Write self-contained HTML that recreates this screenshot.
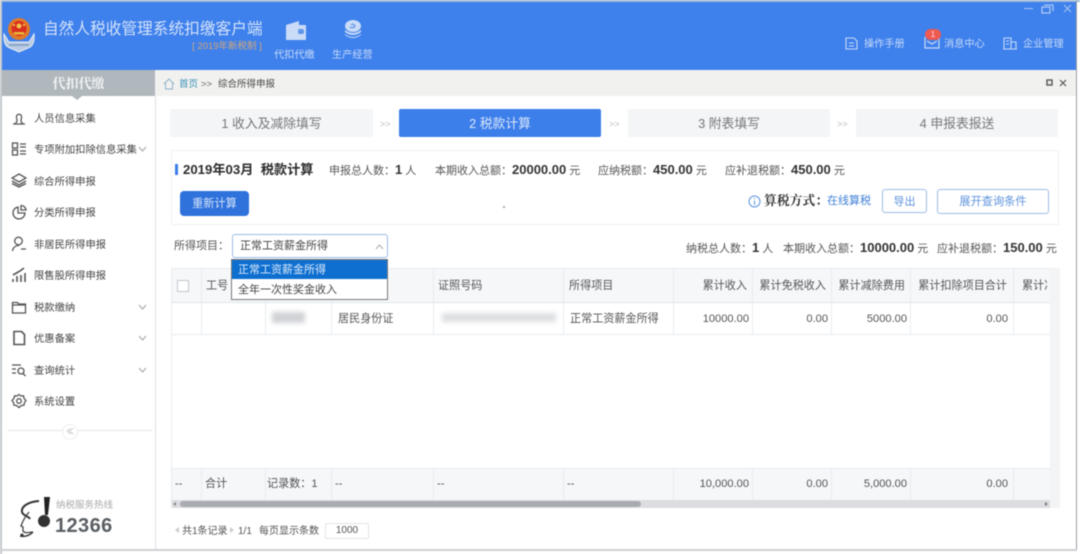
<!DOCTYPE html>
<html><head><meta charset="utf-8">
<style>
html,body{margin:0;padding:0;background:#fff}
#p{position:relative;width:1080px;height:554px;overflow:hidden;background:#fff;font-family:"Liberation Sans","Noto Sans CJK SC",sans-serif;font-size:11px;color:#555;filter:blur(.4px)}
#p div,#p svg{position:absolute}
.t{white-space:nowrap;line-height:16px}
.b{font-weight:bold;color:#333;font-size:13px}
.st{top:109px;height:28px;line-height:30px;background:#f3f5f7;color:#777;text-align:center;font-size:12.8px}
.ar{top:117px;color:#bbb;font-size:9px;line-height:14px}
.m{left:34px;color:#444;font-size:10.3px;white-space:nowrap;line-height:16px}
.ic{left:11px;width:16px;height:16px;fill:none;stroke:#555;stroke-width:1.3}
.ch{left:138px;width:9px;height:6px;fill:none;stroke:#aaa;stroke-width:1.2}
.v{background:#e8ecef;width:1px}
.h{background:#e8ecef;height:1px}
.c{white-space:nowrap;line-height:16px;color:#555;font-size:11.1px}
.r{text-align:right}
.wh{color:#c6daf9;font-size:10.2px;white-space:nowrap;line-height:14px}
</style></head><body><div id="p">

<!-- header -->
<div style="left:1px;top:1px;width:1075px;height:69px;background:#3e80ec"></div>
<div style="left:0;top:0;width:1080px;height:2px;background:#9db9d8"></div>
<div style="left:0;top:0;width:2px;height:554px;background:#c4c8cc"></div>
<div style="left:1076px;top:0;width:1px;height:551px;background:#9a9ea2"></div>
<div style="left:0;top:549px;width:1077px;height:2px;background:#cdcfd1"></div>

<!-- emblem -->
<svg style="left:3px;top:18px" width="32" height="36" viewBox="0 0 32 36">
<path d="M1 16 Q0 28 7 30 L16 34 L25 30 Q32 28 31 16 L26 24 H6Z" fill="#b9cbe2" stroke="#e6edf6" stroke-width="1"/>
<path d="M6 27H26" stroke="#7f9cc6" stroke-width="1.500"/>
<circle cx="16" cy="11" r="11" fill="#e0792a"/>
<circle cx="16" cy="10.500" r="7.500" fill="#d92f1e"/>
<path d="M11 14h10v2.500H11z" fill="#e9b93c"/>
<circle cx="16" cy="8" r="2.500" fill="#f0c54a"/>
<circle cx="11" cy="7" r="1.100" fill="#f0c54a"/><circle cx="21" cy="7" r="1.100" fill="#f0c54a"/>
</svg>

<div class="t" style="left:43px;top:20px;font-size:15.7px;line-height:20px;color:#d3e2fa">自然人税收管理系统扣缴客户端</div>
<div class="t" style="left:192px;top:41px;width:70px;height:12px;font-size:9.500px;line-height:12px;color:#d4a878;text-align:center">[ 2019年新税制 ]</div>

<!-- wallet -->
<svg style="left:285px;top:20px" width="22" height="21" viewBox="0 0 22 21"><path d="M1 5 L14 1 V5 H21 V20 H1Z" fill="#c9dbf7"/><rect x="13" y="9" width="6" height="5" rx="2" fill="#5f95ea"/></svg>
<div class="wh" style="left:274px;top:49px">代扣代缴</div>
<!-- coins -->
<svg style="left:344px;top:20px" width="18" height="20" viewBox="0 0 18 20"><ellipse cx="9" cy="6" rx="8" ry="6" fill="#c9dbf7"/><path d="M1 10 Q9 16 17 10 V12 Q9 18 1 12Z M1 14 Q9 20 17 14 V15 Q9 21 1 15Z" fill="#c9dbf7"/><path d="M6 7 Q9 9 11 6 Q9 3 7 5" stroke="#5f95ea" fill="none" stroke-width="1.200"/></svg>
<div class="wh" style="left:332px;top:49px">生产经营</div>

<!-- window controls -->
<div style="left:1024px;top:8px;width:9px;height:1px;background:#a9c6f4"></div>
<svg style="left:1041px;top:4px" width="13" height="10" viewBox="0 0 13 10" fill="none" stroke="#bcd3f7" stroke-width="1.100"><rect x="1" y="3" width="8" height="6"/><path d="M3 1H12V7"/></svg>
<svg style="left:1063px;top:4px" width="9" height="9" viewBox="0 0 9 9" stroke="#a9c6f4" stroke-width="1"><path d="M1 1L8 8M8 1L1 8"/></svg>

<!-- top right items -->
<svg style="left:845px;top:37px" width="13" height="13" viewBox="0 0 13 13" fill="none" stroke="#c6daf9" stroke-width="1.100"><path d="M1 1H9L12 4V12H1Z M4 6H9 M4 9H9"/></svg>
<div class="wh" style="left:864px;top:38px">操作手册</div>
<svg style="left:924px;top:35px" width="16" height="14" viewBox="0 0 16 14" fill="none" stroke="#c6daf9" stroke-width="1.200"><path d="M1 2V13H15V2 M3 6L8 9L13 6"/></svg>
<div style="left:925px;top:29px;width:16px;height:11px;border-radius:6px;background:#ef5a50;color:#fde;font-size:8px;line-height:11px;text-align:center">1</div>
<div class="wh" style="left:944px;top:38px">消息中心</div>
<svg style="left:1003px;top:37px" width="14" height="13" viewBox="0 0 14 13" fill="none" stroke="#c6daf9" stroke-width="1.100"><path d="M1 12V1H8V12 M8 5H13V12 M0 12H14 M3 4H6 M3 7H6"/></svg>
<div class="wh" style="left:1023px;top:38px">企业管理</div>

<!-- sidebar tab + breadcrumb -->
<div style="left:2px;top:70px;width:153px;height:26px;background:#b0b8bd;color:#f4f6f7;font-weight:bold;font-size:13px;line-height:28px;text-align:center;font-family:'Liberation Serif','Noto Serif CJK SC',serif">代扣代缴</div>
<div style="left:72px;top:96px;width:0;height:0;border-left:5px solid transparent;border-right:5px solid transparent;border-top:4px solid #b0b8bd"></div>
<div style="left:155px;top:70px;width:921px;height:26px;background:#f1f1ef"></div>
<svg style="left:163px;top:78px" width="12" height="12" viewBox="0 0 12 12" fill="none" stroke="#8fb3c9" stroke-width="1"><path d="M1 6L6 1L11 6M2.500 5V11H9.500V5"/></svg>
<div class="t" style="left:179px;top:77px;font-size:9.500px;color:#3a8fb5">首页</div>
<div class="t" style="left:201px;top:77px;font-size:9.500px;color:#666">&gt;&gt;</div>
<div class="t" style="left:218px;top:77px;font-size:9.500px;color:#444">综合所得申报</div>
<svg style="left:1046px;top:79px" width="7" height="7" viewBox="0 0 7 7" fill="none" stroke="#555" stroke-width="1.400"><rect x="1" y="1" width="5" height="5"/></svg>
<svg style="left:1059px;top:79px" width="8" height="8" viewBox="0 0 8 8" stroke="#555" stroke-width="1.200"><path d="M1 1L7 7M7 1L1 7"/></svg>

<div style="left:155px;top:96px;width:1px;height:453px;background:#dfe1e3"></div>

<!-- sidebar menu -->
<svg class="ic" style="top:110px" viewBox="0 0 16 16"><path d="M2 14H14 M4 14C7 11 6 10 5.500 8C4.500 3 11.500 3 10.500 8C10 10 9 11 12 14"/></svg>
<div class="m" style="top:112px">人员信息采集</div>
<svg class="ic" style="top:141px" viewBox="0 0 16 16"><rect x="1.500" y="2" width="5" height="5"/><rect x="1.500" y="9" width="5" height="5"/><path d="M9 3H15M9 6H15M9 10H15M9 13H15"/></svg>
<div class="m" style="top:143px">专项附加扣除信息采集</div>
<svg class="ch" style="top:146px" viewBox="0 0 9 6"><path d="M1 1L4.500 5L8 1"/></svg>
<svg class="ic" style="top:172px" viewBox="0 0 16 16"><path d="M8 2L15 6L8 10L1 6Z M1 9L8 13L15 9 M1 11.500L8 15L15 11.500"/></svg>
<div class="m" style="top:175px">综合所得申报</div>
<svg class="ic" style="top:204px" viewBox="0 0 16 16"><path d="M7 3A6 6 0 1 0 14 9H7Z M10 1.500A5 5 0 0 1 15 6H10Z"/></svg>
<div class="m" style="top:206px">分类所得申报</div>
<svg class="ic" style="top:236px" viewBox="0 0 16 16"><circle cx="7.500" cy="5" r="3.800"/><path d="M1.500 15C2 11 5 9.500 8 9.500 M10 13H15"/></svg>
<div class="m" style="top:238px">非居民所得申报</div>
<svg class="ic" style="top:267px" viewBox="0 0 16 16"><path d="M2 15V12M6 15V9M10 15V8M14 15V6M2 8L9 4L13 1" stroke-width="1.600"/></svg>
<div class="m" style="top:269px">限售股所得申报</div>
<svg class="ic" style="top:299px" viewBox="0 0 16 16"><path d="M1.500 3.500H6.500L7.500 5H14.500V14H1.500Z M1.500 6H14.500"/></svg>
<div class="m" style="top:301px">税款缴纳</div>
<svg class="ch" style="top:304px" viewBox="0 0 9 6"><path d="M1 1L4.500 5L8 1"/></svg>
<svg class="ic" style="top:330px" viewBox="0 0 16 16"><path d="M3 1.500H10.500L13.500 4.500V14.500H3Z" stroke-width="1.600"/></svg>
<div class="m" style="top:332px">优惠备案</div>
<svg class="ch" style="top:335px" viewBox="0 0 9 6"><path d="M1 1L4.500 5L8 1"/></svg>
<svg class="ic" style="top:362px" viewBox="0 0 16 16"><path d="M1 3H10M1 7H5M1 11H5"/><circle cx="10" cy="9" r="3"/><path d="M12 11.500L14.500 14"/></svg>
<div class="m" style="top:364px">查询统计</div>
<svg class="ch" style="top:367px" viewBox="0 0 9 6"><path d="M1 1L4.500 5L8 1"/></svg>
<svg class="ic" style="top:393px" viewBox="0 0 16 16"><path d="M8 1.500L10 3L12.500 2.800L13 5.300L15 7.500L13.500 9.500L13 12.200L10.500 12.500L8 14.500L5.500 12.500L3 12.200L2.500 9.500L1 7.500L3 5.300L3.500 2.800L6 3Z"/><circle cx="8" cy="8" r="2.300"/></svg>
<div class="m" style="top:395px">系统设置</div>

<div style="left:8px;top:430px;width:144px;height:1px;background:#e6e6e6"></div>
<div style="left:62px;top:424px;width:14px;height:14px;border-radius:8px;background:#fff;border:1px solid #eee;color:#aaa;font-size:8px;line-height:14px;text-align:center">≪</div>

<!-- hotline -->
<svg style="left:19px;top:496px" width="34" height="42" viewBox="0 0 34 42"><path d="M20 5C8 6 2 11 3 16C4 20 10 20 11 23" fill="none" stroke="#333" stroke-width="2"/><path d="M10 16C5 22 3 27 2 30L4 31L4 35C6 38 10 36 14 36" fill="none" stroke="#444" stroke-width="1.300"/><path d="M25 1H31L29 19H26Z" fill="#222"/><circle cx="25" cy="25" r="6" fill="#333"/><path d="M1 40C6 41 10 40 14 36" fill="none" stroke="#333" stroke-width="1.500"/><circle cx="3" cy="39" r="1.500" fill="#333"/></svg>
<div class="t" style="left:56px;top:499px;font-size:9.500px;line-height:14px;color:#aaa">纳税服务热线</div>
<div class="t" style="left:55px;top:514px;font-size:20px;line-height:24px;font-weight:bold;color:#5a5f64;letter-spacing:.4px">12366</div>

<!-- steps -->
<div class="st" style="left:170px;width:203px">1 收入及减除填写</div>
<div class="ar" style="left:380px">&gt;&gt;</div>
<div class="st" style="left:399px;width:202px;background:#3d7fea;color:#dbe7fb;border-radius:2px">2 税款计算</div>
<div class="ar" style="left:609px">&gt;&gt;</div>
<div class="st" style="left:628px;width:202px">3 附表填写</div>
<div class="ar" style="left:837px">&gt;&gt;</div>
<div class="st" style="left:856px;width:202px">4 申报表报送</div>

<!-- summary panel -->
<div style="left:171px;top:150px;width:888px;height:75px;border:1px solid #eef0f2;box-sizing:border-box;background:#fff"></div>
<div style="left:175px;top:164px;width:3px;height:11px;background:#3d7fea"></div>
<div class="t" style="left:183px;top:162px;font-size:13.2px;font-weight:bold;color:#2c2c2c">2019年03月&nbsp; 税款计算</div>
<div class="t" style="left:329px;top:162px">申报总人数：<span class="b">1</span> 人</div>
<div class="t" style="left:435px;top:162px">本期收入总额：<span class="b">20000.00</span> 元</div>
<div class="t" style="left:598px;top:162px">应纳税额：<span class="b">450.00</span> 元</div>
<div class="t" style="left:725px;top:162px">应补退税额：<span class="b">450.00</span> 元</div>
<div style="left:180px;top:191px;width:69px;height:25px;border-radius:4px;background:#2f72dc;color:#d7e5fb;font-size:11.2px;line-height:27px;text-align:center">重新计算</div>
<div style="left:503px;top:206px;width:2px;height:2px;background:#aaa"></div>
<svg style="left:748px;top:195px" width="13" height="13" viewBox="0 0 13 13" fill="none" stroke="#5b94e0"><circle cx="6.500" cy="6.500" r="5.500"/><path d="M6.500 5.500V10M6.500 3V4.300"/></svg>
<div class="t" style="left:764px;top:193px;font-size:12.8px;font-weight:bold;color:#333;font-family:'Liberation Serif','Noto Serif CJK SC',serif">算税方式：</div>
<div class="t" style="left:827px;top:193px;font-size:11px;color:#3f7fd6">在线算税</div>
<div style="left:882px;top:189px;width:45px;height:24px;box-sizing:border-box;border:1px solid #9dbde6;border-radius:3px;color:#5f94dc;font-size:11px;line-height:24px;text-align:center">导出</div>
<div style="left:937px;top:189px;width:112px;height:25px;box-sizing:border-box;border:1px solid #9dbde6;border-radius:3px;color:#5f94dc;font-size:11.2px;line-height:25px;text-align:center">展开查询条件</div>

<!-- filter row -->
<div class="t" style="left:174px;top:238px">所得项目：</div>
<div class="t" style="left:686px;top:240px">纳税总人数：<span class="b">1</span> 人</div>
<div class="t" style="left:783px;top:240px">本期收入总额：<span class="b">10000.00</span> 元</div>
<div class="t" style="left:937px;top:240px">应补退税额：<span class="b">150.00</span> 元</div>

<!-- table -->
<div style="left:172px;top:268px;width:878px;height:35px;background:#f5f7f9"></div>
<div style="left:172px;top:468px;width:878px;height:32px;background:#f5f7f9"></div>
<div style="left:1050px;top:268px;width:10px;height:240px;background:#f3f4f5"></div>
<div class="h" style="left:172px;top:268px;width:878px"></div>
<div class="h" style="left:172px;top:302px;width:878px;background:#dfe6eb"></div>
<div class="h" style="left:172px;top:334px;width:878px"></div>
<div class="h" style="left:172px;top:468px;width:878px"></div>
<div class="v" style="left:171px;top:268px;height:240px"></div>
<div class="v" style="left:201px;top:268px;height:66px"></div><div class="v" style="left:201px;top:468px;height:32px"></div>
<div class="v" style="left:265px;top:268px;height:66px"></div><div class="v" style="left:265px;top:468px;height:32px"></div>
<div class="v" style="left:331px;top:268px;height:66px"></div><div class="v" style="left:331px;top:468px;height:32px"></div>
<div class="v" style="left:433px;top:268px;height:66px"></div><div class="v" style="left:433px;top:468px;height:32px"></div>
<div class="v" style="left:563px;top:268px;height:66px"></div><div class="v" style="left:563px;top:468px;height:32px"></div>
<div class="v" style="left:673px;top:268px;height:66px"></div><div class="v" style="left:673px;top:468px;height:32px"></div>
<div class="v" style="left:752px;top:268px;height:66px"></div><div class="v" style="left:752px;top:468px;height:32px"></div>
<div class="v" style="left:831px;top:268px;height:66px"></div><div class="v" style="left:831px;top:468px;height:32px"></div>
<div class="v" style="left:910px;top:268px;height:66px"></div><div class="v" style="left:910px;top:468px;height:32px"></div>
<div class="v" style="left:1013px;top:268px;height:66px"></div><div class="v" style="left:1013px;top:468px;height:32px"></div>

<div style="left:177px;top:280px;width:10px;height:10px;border:1px solid #c4c8cc;background:#fff"></div>
<div class="c" style="left:206px;top:278px">工号</div>
<div class="c" style="left:438px;top:278px">证照号码</div>
<div class="c" style="left:569px;top:278px">所得项目</div>
<div class="c r" style="left:673px;top:278px;width:74px">累计收入</div>
<div class="c r" style="left:752px;top:278px;width:74px">累计免税收入</div>
<div class="c r" style="left:831px;top:278px;width:74px">累计减除费用</div>
<div class="c r" style="left:910px;top:278px;width:97px">累计扣除项目合计</div>
<div style="left:1014px;top:278px;width:33px;height:16px;overflow:hidden"><div class="c" style="left:8px;top:0">累计准予</div></div>

<div style="left:272px;top:312px;width:33px;height:11px;background:#d0d2d5;filter:blur(2.500px)"></div>
<div class="c" style="left:338px;top:311px">居民身份证</div>
<div style="left:442px;top:313px;width:114px;height:9px;background:#dcdfe2;filter:blur(2.500px)"></div>
<div class="c" style="left:570px;top:311px">正常工资薪金所得</div>
<div class="c r" style="left:673px;top:311px;width:76px">10000.00</div>
<div class="c r" style="left:752px;top:311px;width:76px">0.00</div>
<div class="c r" style="left:831px;top:311px;width:76px">5000.00</div>
<div class="c r" style="left:910px;top:311px;width:98px">0.00</div>

<div class="c" style="left:175px;top:476px">--</div>
<div class="c" style="left:205px;top:476px">合计</div>
<div class="c" style="left:267px;top:476px">记录数：1</div>
<div class="c" style="left:335px;top:476px">--</div>
<div class="c" style="left:437px;top:476px">--</div>
<div class="c" style="left:567px;top:476px">--</div>
<div class="c r" style="left:673px;top:476px;width:76px">10,000.00</div>
<div class="c r" style="left:752px;top:476px;width:76px">0.00</div>
<div class="c r" style="left:831px;top:476px;width:76px">5,000.00</div>
<div class="c r" style="left:910px;top:476px;width:98px">0.00</div>

<!-- scrollbar -->
<div style="left:172px;top:500px;width:878px;height:8px;background:#dcdde0"></div>
<div style="left:180px;top:501px;width:461px;height:6px;border-radius:3px;background:#a9abb2"></div>
<div style="left:173px;top:502px;width:0;height:0;border-top:2.500px solid transparent;border-bottom:2.500px solid transparent;border-right:3px solid #888"></div>
<div style="left:1045px;top:502px;width:0;height:0;border-top:2.500px solid transparent;border-bottom:2.500px solid transparent;border-left:3px solid #777"></div>

<!-- dropdown -->
<div style="left:232px;top:234px;width:156px;height:24px;box-sizing:border-box;border:1px solid #9dbde6;border-radius:3px;background:#fff"></div>
<div class="t" style="left:240px;top:238px;color:#444">正常工资薪金所得</div>
<svg style="left:375px;top:244px" width="9" height="6" viewBox="0 0 9 6" fill="none" stroke="#aaa"><path d="M1 5L4.500 1L8 5"/></svg>
<div style="left:231px;top:259px;width:157px;height:41px;box-sizing:border-box;border:1px solid #777;background:#fff"></div>
<div style="left:232px;top:260px;width:155px;height:19px;background:#0e6fd0;color:#dcebfb;font-size:11px;line-height:20px;text-indent:6px">正常工资薪金所得</div>
<div class="t" style="left:238px;top:282px;color:#444">全年一次性奖金收入</div>

<!-- pager -->
<div style="left:175px;top:527px;width:0;height:0;border-top:3.500px solid transparent;border-bottom:3.500px solid transparent;border-right:4px solid #ccc"></div>
<div class="t" style="left:182px;top:524px;font-size:10px">共1条记录</div>
<div style="left:230px;top:527px;width:0;height:0;border-top:3.500px solid transparent;border-bottom:3.500px solid transparent;border-left:4px solid #ccc"></div>
<div class="t" style="left:238px;top:524px;font-size:10px">1/1</div>
<div class="t" style="left:259px;top:524px;font-size:10px">每页显示条数</div>
<div style="left:325px;top:523px;width:44px;height:16px;box-sizing:border-box;border:1px solid #e2e4e6;border-radius:2px;font-size:10px;line-height:14px;text-align:center;color:#555">1000</div>

</div></body></html>
